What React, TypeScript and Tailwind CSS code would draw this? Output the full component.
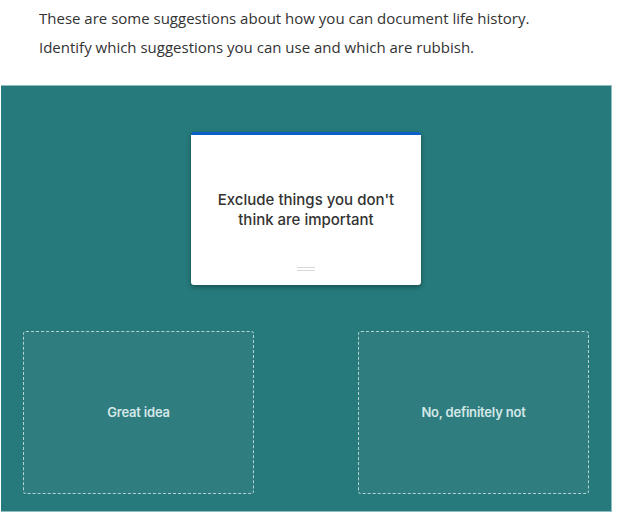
export default function App() {
  return (
    <div className="w-[617px] h-[514px] bg-white overflow-hidden" style={{ fontFamily: '"Open Sans", sans-serif' }}>
      <div className="pl-[39px] pt-[4px] text-[15px] leading-[29px] text-[#333333]">
        <p>These are some suggestions about how you can document life history.</p>
        <p>Identify which suggestions you can use and which are rubbish.</p>
      </div>

      <div className="mt-[23px] ml-[1px] w-[611px] h-[427px] bg-[#267a7b] border-t border-r border-b border-[#8fbcbc] flex flex-col items-center">
        <div className="mt-[46px] w-[230px] h-[153px] bg-white rounded-[3px] border-t-[3px] border-[#0b5fc9] shadow-[0_2px_5px_rgba(0,0,0,0.35)] flex flex-col items-center">
          <div className="flex-1 flex items-center justify-center px-4 pt-[18px]">
            <p className="text-center text-[15px] leading-[20px] text-[#333333] font-medium" style={{ fontFamily: 'Inter, "Noto Sans", sans-serif' }}>
              Exclude things you don't<br />think are important
            </p>
          </div>
          <div className="mb-[14px] flex flex-col gap-[2px]">
            <div className="w-[18px] h-px bg-[#d8d8d8]" />
            <div className="w-[18px] h-px bg-[#d8d8d8]" />
          </div>
        </div>

        <div className="mt-[46px] w-full flex justify-between pl-[22px] pr-[22px]">
          {['Great idea', 'No, definitely not'].map(label => (
            <div
              key={label}
              className="w-[231px] h-[163px] rounded-[3px] border border-dashed border-[#b4d3d3] bg-[#2f7d7e] flex items-center justify-center"
            >
              <span className="text-[13px] font-semibold text-[#d4e8e8] tracking-[-0.2px]" style={{ fontFamily: 'Inter, "Noto Sans", sans-serif' }}>
                {label}
              </span>
            </div>
          ))}
        </div>
      </div>
    </div>
  );
}
